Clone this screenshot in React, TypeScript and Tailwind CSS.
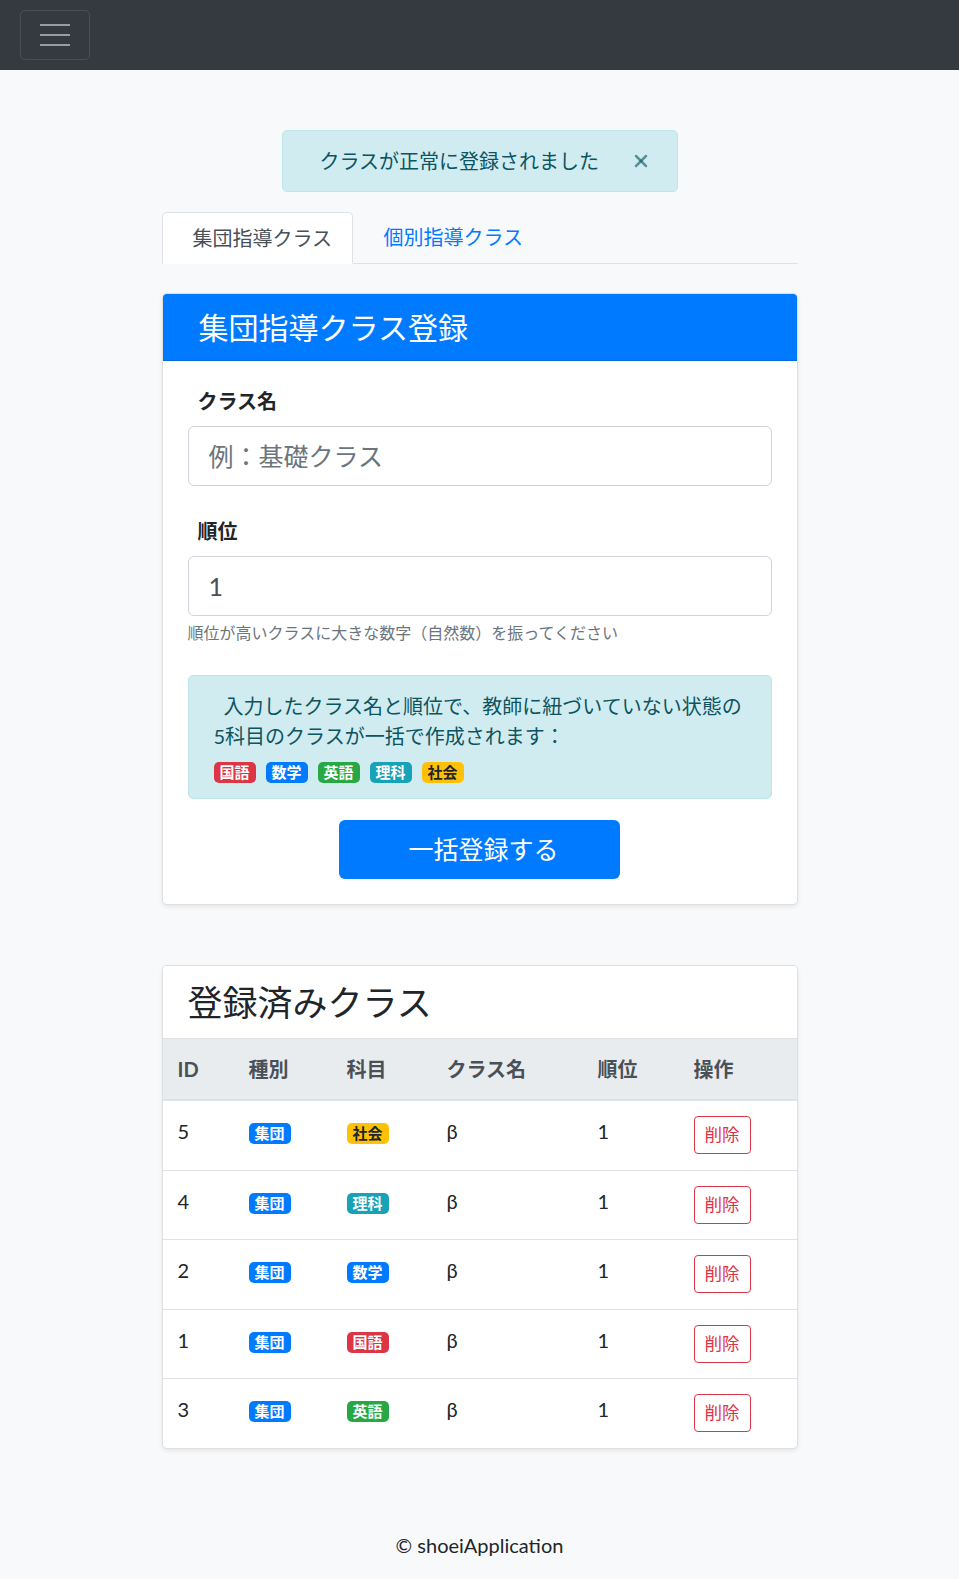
import { X } from 'lucide-react';

// Subject badges used in the info box and the table
const subjectColors: Record<string, string> = {
  国語: 'bg-[#dc3545] text-white',
  数学: 'bg-[#007bff] text-white',
  英語: 'bg-[#28a745] text-white',
  理科: 'bg-[#17a2b8] text-white',
  社会: 'bg-[#ffc107] text-[#212529]',
};

const rows = [
  { id: 5, subject: '社会' },
  { id: 4, subject: '理科' },
  { id: 2, subject: '数学' },
  { id: 1, subject: '国語' },
  { id: 3, subject: '英語' },
];

function Badge({ label, className }: { label: string; className: string }) {
  return (
    <span
      className={`inline-block rounded-[5px] px-[6px] py-[3px] text-[15px] font-bold leading-none align-baseline ${className}`}
    >
      {label}
    </span>
  );
}

function Navbar() {
  return (
    <nav className="flex h-[70px] items-center bg-[#343a40] px-[20px]">
      <button className="flex h-[50px] w-[70px] flex-col items-center justify-center gap-[8px] rounded-[5px] border border-white/10">
        <span className="block h-[2px] w-[30px] bg-white/50" />
        <span className="block h-[2px] w-[30px] bg-white/50" />
        <span className="block h-[2px] w-[30px] bg-white/50" />
      </button>
    </nav>
  );
}

function RegisterCard() {
  return (
    <div className="overflow-hidden rounded-[5px] border border-black/[0.125] bg-white shadow-[0_2px_4px_rgba(0,0,0,0.075)]">
      <div className="border-b border-black/[0.125] bg-[#007bff] px-[36px] py-[15px] text-[30px] leading-[36px] text-white">
        集団指導クラス登録
      </div>
      <div className="p-[25px]">
        <div className="mb-[30px]">
          <label className="mb-[10px] block pl-[10px] text-[20px] font-bold leading-[30px] text-[#212529]">
            クラス名
          </label>
          <input
            className="block h-[60px] w-full rounded-[6px] border border-[#ced4da] px-[20px] text-[25px] text-[#495057] placeholder:text-[#6c757d] outline-none"
            placeholder="例：基礎クラス"
          />
        </div>
        <div className="mb-[30px]">
          <label className="mb-[10px] block pl-[10px] text-[20px] font-bold leading-[30px] text-[#212529]">
            順位
          </label>
          <input
            className="block h-[60px] w-full rounded-[6px] border border-[#ced4da] px-[20px] text-[25px] text-[#495057] outline-none"
            defaultValue="1"
          />
          <small className="mt-[5px] block text-[16px] leading-[24px] text-[#6c757d]">
            順位が高いクラスに大きな数字（自然数）を振ってください
          </small>
        </div>
        <div className="mb-[21px] rounded-[5px] border border-[#bee5eb] bg-[#d1ecf1] px-[25px] py-[15px] text-[#0c5460]">
          <p className="text-[20px] leading-[30px]">
            <span className="pl-[10px]">入力したクラス名と順位で、教師に紐づいていない状態の</span>
            <br />
            5科目のクラスが一括で作成されます：
          </p>
          <div className="mt-[11px] flex gap-[10px]">
            {Object.keys(subjectColors).map((s) => (
              <Badge key={s} label={s} className={subjectColors[s]} />
            ))}
          </div>
        </div>
        <div className="flex justify-center">
          <button className="h-[59px] w-[281px] rounded-[6px] bg-[#007bff] pl-[8px] text-[25px] leading-[37px] text-white">
            一括登録する
          </button>
        </div>
      </div>
    </div>
  );
}

function ClassTable() {
  const th = 'border-t border-b-2 border-[#dee2e6] px-[15px] py-[15px] text-left text-[20px] font-bold leading-[30px] text-[#495057]';
  const td = 'border-t border-[#dee2e6] px-[15px] pt-[15px] pb-[15.5px] align-top text-[20px] leading-[30px] text-[#212529]';
  return (
    <div className="overflow-hidden rounded-[5px] border border-black/[0.125] bg-white shadow-[0_2px_4px_rgba(0,0,0,0.075)]">
      <div className="bg-white px-[25px] py-[15px] text-[35px] leading-[42px] text-[#212529]">
        登録済みクラス
      </div>
      <table className="w-full table-fixed border-collapse">
        <thead className="bg-[#e9ecef]">
          <tr>
            <th className={`${th} w-[71px]`}>ID</th>
            <th className={`${th} w-[98px]`}>種別</th>
            <th className={`${th} w-[100px]`}>科目</th>
            <th className={`${th} w-[151px]`}>クラス名</th>
            <th className={`${th} w-[96px]`}>順位</th>
            <th className={`${th} w-[118px]`}>操作</th>
          </tr>
        </thead>
        <tbody>
          {rows.map((r, i) => (
            <tr key={r.id}>
              <td className={`${td} ${i === 0 ? 'border-t-0' : ''}`}>{r.id}</td>
              <td className={`${td} ${i === 0 ? 'border-t-0' : ''}`}>
                <Badge label="集団" className="bg-[#007bff] text-white" />
              </td>
              <td className={`${td} ${i === 0 ? 'border-t-0' : ''}`}>
                <Badge label={r.subject} className={subjectColors[r.subject]} />
              </td>
              <td className={`${td} ${i === 0 ? 'border-t-0' : ''}`}>β</td>
              <td className={`${td} ${i === 0 ? 'border-t-0' : ''}`}>1</td>
              <td className={`${td} ${i === 0 ? 'border-t-0' : ''}`}>
                <button className="h-[38px] rounded-[4px] border border-[#dc3545] px-[10px] text-[17.5px] leading-[26px] text-[#dc3545]">
                  削除
                </button>
              </td>
            </tr>
          ))}
        </tbody>
      </table>
    </div>
  );
}

export default function App() {
  return (
    <div className="min-h-[1579px] bg-[#f8f9fa] font-['Lato','Noto_Sans_CJK_JP',sans-serif] text-[#212529]">
      <Navbar />
      <main className="mx-auto w-[636px] pt-[60px] pb-[61px]">
        <div className="flex justify-center">
          <div className="relative flex h-[62px] w-[396px] items-center rounded-[5px] border border-[#bee5eb] bg-[#d1ecf1] pl-[37px] text-[20px] leading-[30px] text-[#0c5460]">
            クラスが正常に登録されました
            <button className="absolute left-[348px] top-1/2 -translate-y-1/2 text-[#0c5460]/60">
              <X size={20} strokeWidth={3} />
            </button>
          </div>
        </div>

        <div className="mt-[20px] flex border-b border-[#dee2e6]">
          <div className="-mb-px w-[191px] rounded-t-[5px] border border-[#dee2e6] border-b-white bg-white pl-[30px] py-[10px] text-[20px] leading-[30px] text-[#495057]">
            集団指導クラス
          </div>
          <div className="px-[31px] py-[10px] text-[20px] leading-[30px] text-[#007bff]">
            個別指導クラス
          </div>
        </div>

        <div className="mt-[29px]">
          <RegisterCard />
        </div>

        <div className="mt-[60px]">
          <ClassTable />
        </div>
      </main>
      <footer className="py-[20px] text-center text-[20px] leading-[30px] text-[#212529]">
        © shoeiApplication
      </footer>
    </div>
  );
}
